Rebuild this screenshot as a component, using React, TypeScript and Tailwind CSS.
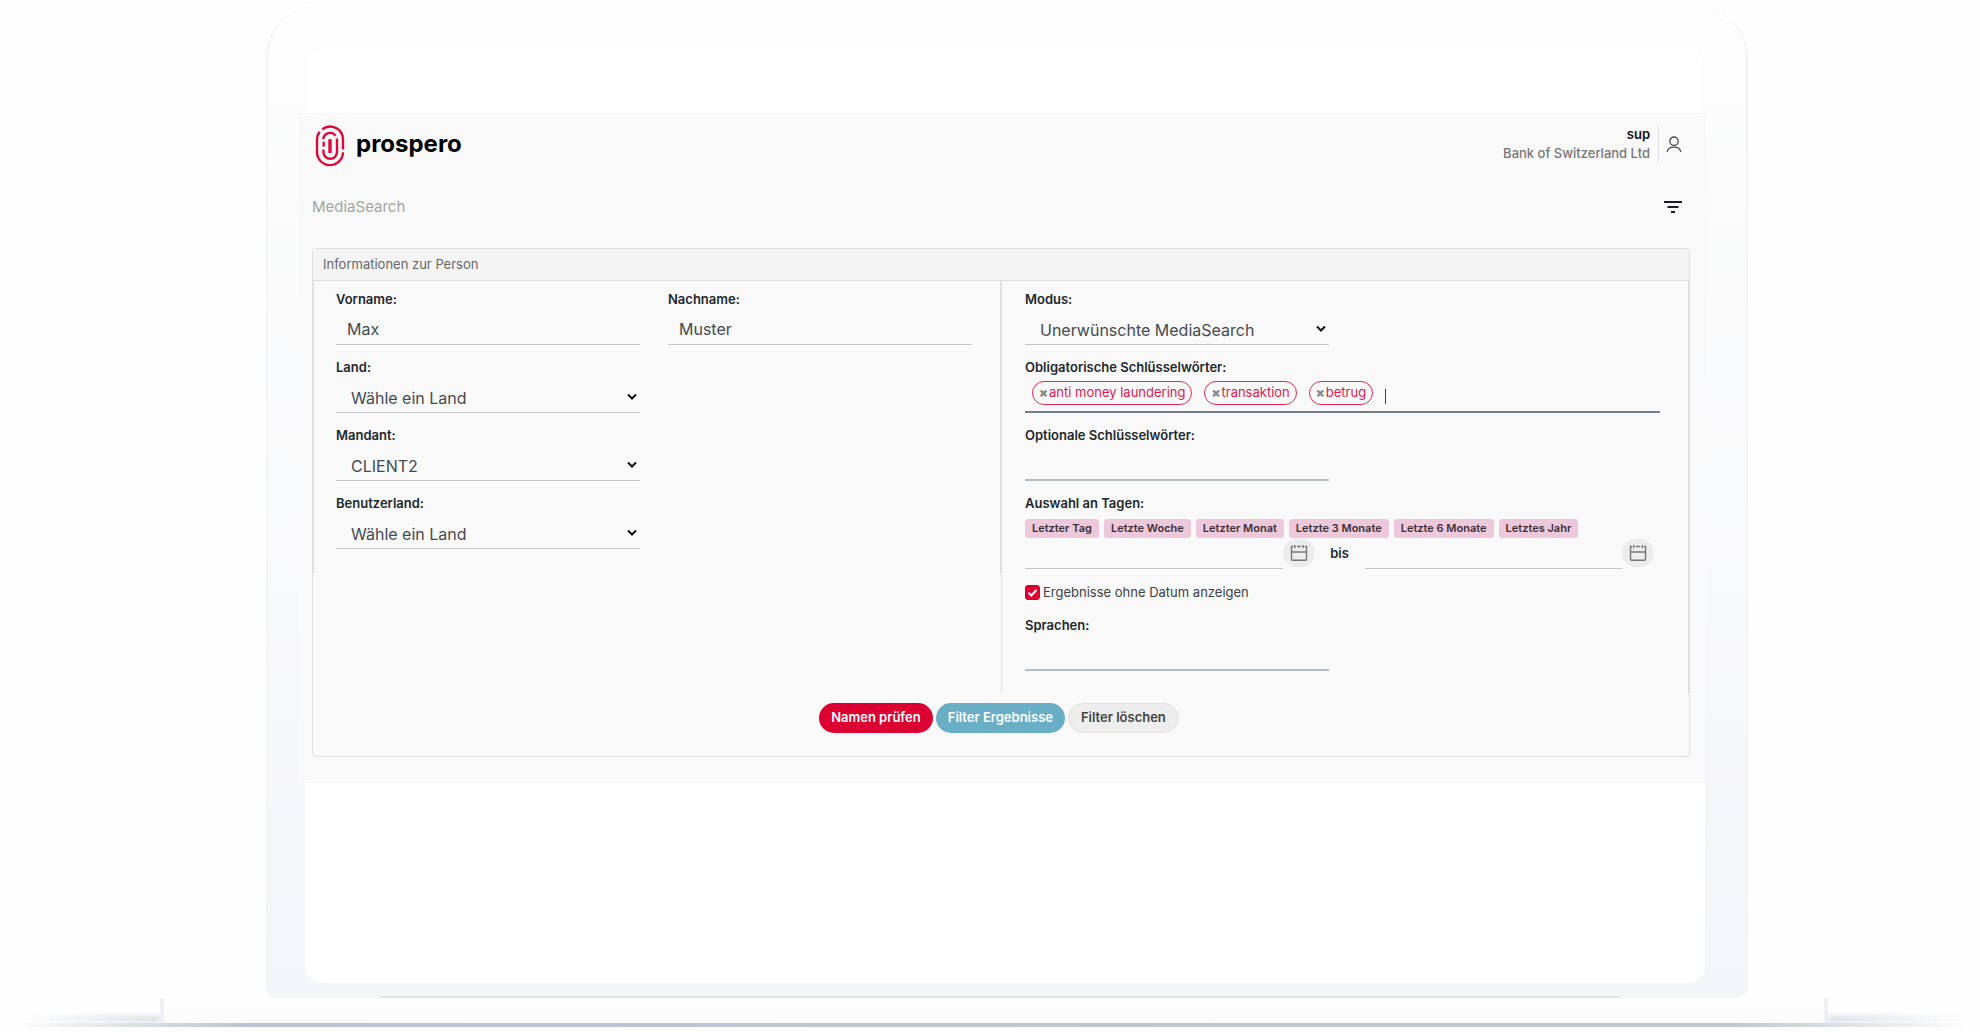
import { useState } from 'react';
import type { ReactNode } from 'react';

const lineInput = "h-9 w-full border-b border-[#c4c6c8] bg-transparent text-base text-[#444b50] outline-none";

const ranges = ['Letzter Tag', 'Letzte Woche', 'Letzter Monat', 'Letzte 3 Monate', 'Letzte 6 Monate', 'Letztes Jahr'];

function Logo() {
    return (
        <svg viewBox="0 0 30 42" className="h-[42px] w-[30px]" fill="none" stroke="#dc0a3c" strokeWidth="2.4">
            <path d="M7.2 4.2A13 13 0 0 1 28 14.5V24.5" />
            <path d="M4.6 6.8A13 13 0 0 0 2 14.5V27A13 13 0 0 0 28 27.2" />
            <path d="M8.3 14.2A6.8 6.8 0 0 1 20.6 10.8" />
            <path d="M8.7 16.8V21.6" />
            <path d="M8.4 24.5V27A6.8 6.8 0 0 0 22 27V13.5" />
            <path d="M15 14.2V28" strokeWidth="3.4" />
        </svg>
    );
}

function UserIcon() {
    return (
        <svg viewBox="0 0 16 16" className="h-4 w-4" fill="none" stroke="#4a4a4a" strokeWidth="1.3">
            <circle cx="8" cy="5.2" r="4.2" />
            <path d="M1.2 15.8C1.8 12.6 4 11.2 8 11.2S14.2 12.6 14.8 15.8" />
        </svg>
    );
}

function CalendarIcon() {
    return (
        <svg viewBox="0 0 18 18" className="h-[18px] w-[18px]" fill="none" stroke="#777" strokeWidth="1.4">
            <path d="M3.2 2.5H1.5V15.3Q1.5 16.3 2.5 16.3H15.5Q16.5 16.3 16.5 15.3V2.5H14.8M7 2.5H11M1.5 8H16.5M4.8 1V4.2M13.2 1V4.2" />
        </svg>
    );
}

function Field({ id, label, children }: { id: string; label: string; children: ReactNode }) {
    return (
        <div className="mb-3">
            <label htmlFor={id} className="block text-[13px] leading-5 font-semibold text-[#22282c]">{label}</label>
            {children}
        </div>
    );
}

function SelectBox({ id, options }: { id: string; options: string[] }) {
    return (
        <div className="relative">
            <select id={id} className={`${lineInput} appearance-none pt-[6px] pl-[15px]`}>
                {options.map(o => <option key={o}>{o}</option>)}
            </select>
            <svg viewBox="0 0 10 8" className="pointer-events-none absolute top-4 right-[3px] h-2 w-[10px]" fill="none" stroke="#111" strokeWidth="2">
                <path d="M1 1.5L5 5.5L9 1.5" />
            </svg>
        </div>
    );
}

function DateInput({ label }: { label: string }) {
    return (
        <div className="flex min-w-0 flex-1 items-start">
            <input aria-label={label} className="h-[30px] min-w-0 flex-1 border-b border-[#c4c6c8] bg-transparent px-3 outline-none" />
            <button aria-label={`${label} wählen`} className="flex h-7 w-8 items-center justify-center rounded-full bg-[#ececec]">
                <CalendarIcon />
            </button>
        </div>
    );
}

function SearchForm() {
    const [tags, setTags] = useState(['anti money laundering', 'transaktion', 'betrug']);
    const [undated, setUndated] = useState(true);

    return (
        <section className="rounded-[3px] border border-[#dedfe0] pb-[23px]">
            <h2 className="border-b border-[#dedfe0] bg-[#f4f4f4] px-[10px] text-[13px] leading-[31px] text-[#666]">Informationen zur Person</h2>
            <div className="grid grid-cols-2">
                <div className="grid grid-cols-2 gap-x-7 self-start border-x border-[#dedfe0] pt-2 pr-7 pb-3 pl-[22px]">
                    <Field id="vorname" label="Vorname:">
                        <input id="vorname" defaultValue="Max" className={`${lineInput} px-[11px] pt-1`} />
                    </Field>
                    <Field id="nachname" label="Nachname:">
                        <input id="nachname" defaultValue="Muster" className={`${lineInput} px-[11px] pt-1`} />
                    </Field>
                    <div>
                        <Field id="land" label="Land:">
                            <SelectBox id="land" options={['Wähle ein Land']} />
                        </Field>
                        <Field id="mandant" label="Mandant:">
                            <SelectBox id="mandant" options={['CLIENT2']} />
                        </Field>
                        <Field id="benutzerland" label="Benutzerland:">
                            <SelectBox id="benutzerland" options={['Wähle ein Land']} />
                        </Field>
                    </div>
                </div>

                <div className="border-x border-[#dedfe0] pt-2 pr-7 pb-[10px] pl-[23px]">
                    <div className="grid grid-cols-2 gap-x-7">
                        <Field id="modus" label="Modus:">
                            <SelectBox id="modus" options={['Unerwünschte MediaSearch']} />
                        </Field>
                    </div>
                    <Field id="pflicht" label="Obligatorische Schlüsselwörter:">
                        <div className="flex h-9 items-start gap-3 border-b-2 border-[#6f7d8c] pt-1 pl-[7px]">
                            {tags.map(tag => (
                                <span key={tag} className="flex h-6 items-center rounded-full border border-[#e0295a] px-[6px] text-[13px] whitespace-nowrap text-[#dc1a50]">
                                    <button aria-label={`${tag} entfernen`} onClick={() => setTags(tags.filter(t => t !== tag))} className="mr-px pb-[2px] text-[13px] leading-5 font-black text-[#888]">×</button>
                                    {tag}
                                </span>
                            ))}
                            <span className="mt-2 h-[15px] w-px bg-[#444]" />
                            <input id="pflicht" className="h-6 min-w-0 flex-1 bg-transparent outline-none" />
                        </div>
                    </Field>
                    <div className="grid grid-cols-2 gap-x-7">
                        <Field id="optional" label="Optionale Schlüsselwörter:">
                            <input id="optional" className="h-9 w-full border-b-2 border-[#b4bac2] bg-transparent px-3 outline-none" />
                        </Field>
                    </div>

                    <fieldset className="min-w-0">
                        <legend className="text-[13px] leading-5 font-semibold text-[#22282c]">Auswahl an Tagen:</legend>
                        <div className="mt-[6px] flex gap-[5px]">
                            {ranges.map(r => (
                                <button key={r} className="h-[19px] rounded-[3px] bg-[#edc7da] px-[7px] text-[11px] leading-[19px] font-semibold whitespace-nowrap text-[#3b3038]">{r}</button>
                            ))}
                        </div>
                        <div className="mt-px flex items-start pr-[6px]">
                            <DateInput label="Datum von" />
                            <span className="w-[50px] text-center text-[13px] leading-7 font-semibold text-[#22282c]">bis</span>
                            <DateInput label="Datum bis" />
                        </div>
                    </fieldset>

                    <label className="my-[13px] flex items-center gap-[3px] text-[13px] leading-5 text-[#3c4246]">
                        <span className="relative h-[15px] w-[15px]">
                            <input type="checkbox" checked={undated} onChange={e => setUndated(e.target.checked)} className="block h-[15px] w-[15px] appearance-none rounded-[3px] border border-[#dc0032] checked:bg-[#dc0032]" />
                            {undated && (
                                <svg viewBox="0 0 15 15" className="pointer-events-none absolute inset-0" fill="none" stroke="#fff" strokeWidth="2">
                                    <path d="M3.5 7.8L6.3 10.5L11.5 5" />
                                </svg>
                            )}
                        </span>
                        Ergebnisse ohne Datum anzeigen
                    </label>

                    <div className="grid grid-cols-2 gap-x-7">
                        <Field id="sprachen" label="Sprachen:">
                            <input id="sprachen" className="h-9 w-full border-b-2 border-[#b4bac2] bg-transparent px-3 outline-none" />
                        </Field>
                    </div>
                </div>
            </div>

            <div className="mt-[10px] flex justify-center gap-[3px] pr-1 text-[13px] font-semibold">
                <button className="h-[30px] rounded-full bg-[#dc0032] px-3 text-white">Namen prüfen</button>
                <button className="h-[30px] rounded-full bg-[#6aaec6] px-3 text-white">Filter Ergebnisse</button>
                <button className="h-[30px] rounded-full border border-[#e2e2e2] bg-[#ededed] px-3 text-[#444]">Filter löschen</button>
            </div>
        </section>
    );
}

export default function App() {
    return (
        <div className="min-h-screen overflow-hidden bg-[#fefefe] pt-[7px] font-['Inter',sans-serif]">
            <div className="pl-[34px]">
                <div className="mx-auto max-w-[1482px] rounded-t-[50px] rounded-b-[12px] border-x-2 border-[#f3f4f6] bg-linear-to-b from-[#fdfdfd] to-[#f4f5f8] pt-10 pr-[40px] pl-[30px]">
                    <div className="mr-[3px] ml-[10px] h-[66px] rounded-t-[18px] bg-white" />
                    <main className="bg-[#f9f9f9] pr-4 pb-[26px] pl-[14px]">
                        <header className="flex items-start justify-between pt-3 pr-2 pl-[3px]">
                            <div className="flex items-center gap-[11px]">
                                <Logo />
                                <span className="pb-1 text-2xl font-bold text-black">prospero</span>
                            </div>
                            <div className="flex items-center">
                                <div className="border-r border-[#dedfe0] pr-2 text-right text-[13px] leading-[19px]">
                                    <div className="font-semibold text-[#111]">sup</div>
                                    <div className="font-medium text-[#777]">Bank of Switzerland Ltd</div>
                                </div>
                                <button aria-label="Benutzer" className="ml-[7px]"><UserIcon /></button>
                            </div>
                        </header>
                        <div className="mt-[30px] mb-[31px] flex items-center justify-between pr-2">
                            <h1 className="text-[15px] leading-5 text-[#a5a5a3]">MediaSearch</h1>
                            <button aria-label="Filter">
                                <svg viewBox="0 0 18 12" className="h-3 w-[18px]" fill="none" stroke="#1c1c2c" strokeWidth="2">
                                    <path d="M0 1H18M3.5 6H14.5M7 11H11" />
                                </svg>
                            </button>
                        </div>
                        <SearchForm />
                    </main>
                    <div className="mr-px ml-[7px] h-[200px] rounded-b-[18px] bg-white" />
                    <div className="mr-[86px] ml-[82px] mt-[13px] h-0.5 bg-[#e4e5ea]" />
                </div>
            </div>

            {/* laptop base with its shadow */}
            <div className="flex items-end pl-2">
                <div className="h-2 flex-1 bg-linear-to-r from-transparent from-10% to-[#dfe2ea] blur-[2px]" />
                <div className="relative h-[25px] w-[1668px] max-w-full border-x-4 border-[#f0f1f5] bg-linear-to-b from-white to-[#fafafa]" />
                <div className="h-2 flex-1 bg-linear-to-l from-transparent from-10% to-[#dfe2ea] blur-[2px]" />
            </div>
            <div className="mx-3 h-1 bg-[linear-gradient(to_right,transparent,#bfc3d1_12%,#c3c6d2_88%,transparent)]" />
        </div>
    );
}
